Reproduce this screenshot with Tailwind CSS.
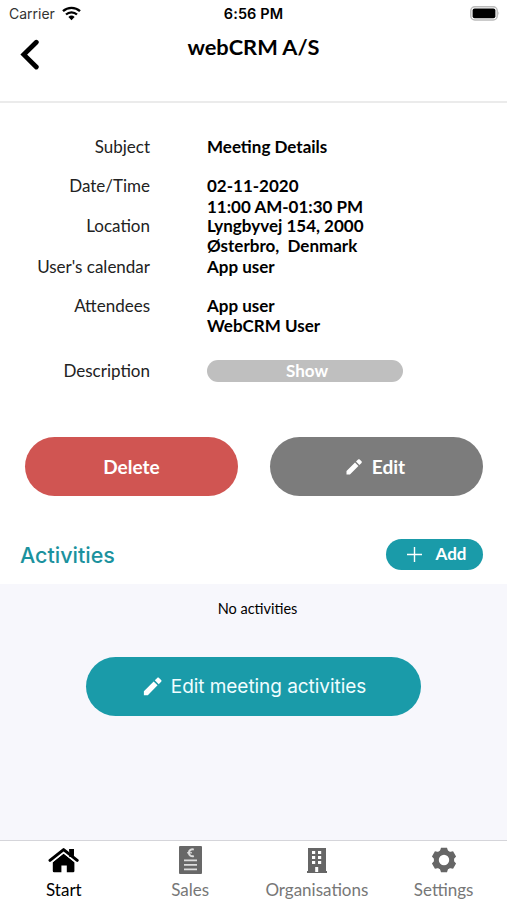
<!DOCTYPE html>
<html lang="en">
<head>
    <meta charset="UTF-8">
    <meta name="viewport" content="width=device-width, initial-scale=1.0">
    <title>webCRM A/S</title>
    <script src="https://cdn.jsdelivr.net/npm/@tailwindcss/browser@4"></script>
</head>
<body class="bg-white text-black font-['Lato',sans-serif]">
    <div class="w-[507px] h-[900px] flex flex-col overflow-hidden">
        <!-- Status bar -->
        <div class="h-[27px] shrink-0 grid grid-cols-3 items-center px-2 font-['Inter',sans-serif] text-[14px]">
            <div class="flex items-center gap-1.5 text-[#333]">
                <span class="w-[48px] whitespace-nowrap pl-px">Carrier</span>
                <svg class="w-[19px] h-[15px]" viewBox="0 0 19 15" fill="none" stroke="#000" stroke-width="2.3">
                    <path d="M1 5.2a12.3 12.3 0 0 1 17 0M4 8.5a8 8 0 0 1 11 0"/>
                    <path d="M6.4 11a4.6 4.6 0 0 1 6.2 0L9.5 14.2z" fill="#000" stroke="none"/>
                </svg>
            </div>
            <span class="text-center font-semibold text-[14.5px] tracking-[0.1px]">6:56 PM</span>
            <svg class="w-[30px] h-[15px] justify-self-end -mr-px" viewBox="0 0 30 15">
                <rect x=".8" y=".8" width="26.4" height="13.2" rx="4" fill="#fff" stroke="#bbb" stroke-width="1.5"/>
                <rect x="2.6" y="2.6" width="22.8" height="9.6" rx="2" fill="#000"/>
                <path d="M28.5 5.2q1.5 2.2 0 4.4z" fill="#aaa"/>
            </svg>
        </div>

        <!-- Header -->
        <header class="h-[76px] shrink-0 border-b-2 border-[#ebebeb] grid grid-cols-[60px_1fr_60px]">
            <svg class="w-[20px] h-[32px] ml-5 mt-[12px]" viewBox="0 0 20 32" fill="none" stroke="#000" stroke-width="4.8" stroke-linecap="round">
                <path d="M16.3 3.2L3.8 15.6L16.3 28"/>
            </svg>
            <h1 class="text-center text-[21.8px] leading-[28px] mt-[6px] font-bold">webCRM A/S</h1>
        </header>

        <!-- Meeting details -->
        <dl class="h-[334px] shrink-0 pt-[34px] grid grid-cols-[150px_1fr] gap-x-[57px] grid-rows-[39.4px_39.4px_40.8px_39px_65px_22px] text-[17px] leading-[20.5px]">
            <dt class="text-right text-[#222]">Subject</dt>
            <dd class="font-bold">Meeting Details</dd>
            <dt class="text-right text-[#222]">Date/Time</dt>
            <dd class="font-bold">02-11-2020<br>11:00 AM-01:30 PM</dd>
            <dt class="text-right text-[#222]">Location</dt>
            <dd class="font-bold">Lyngbyvej 154, 2000<br>Østerbro,&nbsp; Denmark</dd>
            <dt class="text-right text-[#222]">User's calendar</dt>
            <dd class="font-bold">App user</dd>
            <dt class="text-right text-[#222]">Attendees</dt>
            <dd class="font-bold">App user<br>WebCRM User</dd>
            <dt class="text-right text-[#222]">Description</dt>
            <dd><button class="block w-[196px] h-[22px] -mt-px rounded-full bg-[#bfbfbf] text-white font-bold leading-[21px] pl-1">Show</button></dd>
        </dl>

        <div class="flex justify-between pl-[25px] pr-[24px] shrink-0 text-white text-[19px] font-bold">
            <button class="w-[213px] h-[59px] rounded-full bg-[#d05552] pt-[2px]">Delete</button>
            <button class="w-[213px] h-[59px] rounded-full bg-[#7c7c7c] flex items-center justify-center gap-2 pr-1">
                <svg class="w-[20px] h-[20px]" viewBox="0 0 24 24" fill="#fff"><path d="M3 16.9V21h4.1L17.3 10.8 13.2 6.7zM21 7.1c.6-.6.6-1.3 0-1.9l-2.2-2.2c-.6-.6-1.3-.6-1.9 0l-2.5 2.5 4.1 4.1z"/></svg>
                <span class="pt-[2px]">Edit</span>
            </button>
        </div>

        <!-- Activities -->
        <div class="h-[88px] shrink-0 flex items-center justify-between pl-5 pr-[24px] pt-[28px]">
            <h2 class="font-['Inter',sans-serif] text-[21.5px] font-medium text-[#1b929e] pt-[3px]">Activities</h2>
            <button class="w-[97px] h-[31px] rounded-full bg-[#1a9ba9] text-white text-[17px] font-bold flex items-center justify-center gap-[14px] pl-1">
                <svg class="w-[15px] h-[15px]" viewBox="0 0 15 15" stroke="#fff" stroke-width="1.4"><path d="M7.5 0v15M0 7.5h15"/></svg>
                Add
            </button>
        </div>
        <main class="flex-1 bg-[#f7f7fc] flex flex-col items-center">
            <p class="mt-[15px] h-5 text-[14.5px] leading-5 pl-2">No activities</p>
            <button class="mt-[38px] w-[335px] h-[59px] rounded-full bg-[#1a9ba9] text-[#effdff] font-['Inter',sans-serif] text-[19px] tracking-[-0.05px] flex items-center justify-center gap-[7px]">
                <svg class="w-[23px] h-[23px]" viewBox="0 0 24 24" fill="#fff"><path d="M3 16.9V21h4.1L17.3 10.8 13.2 6.7zM21 7.1c.6-.6.6-1.3 0-1.9l-2.2-2.2c-.6-.6-1.3-.6-1.9 0l-2.5 2.5 4.1 4.1z"/></svg>
                <span class="pt-[2px]">Edit meeting activities</span>
            </button>
        </main>

        <!-- Tab bar -->
        <nav class="h-[60px] shrink-0 border-t border-[#d5d5da] bg-white grid grid-cols-4 text-[17px] leading-5 text-[#777]">
            <a class="flex flex-col items-center pt-[4px] gap-[5px] text-black">
                <svg class="w-[32px] h-[30px]" viewBox="0 0 32 30" fill="#000">
                    <path d="M22.3 4h4.6v9h-4.6z"/>
                    <path d="M16.6 8.4l10.8 8.9V26q0 1.3-1.3 1.3h-6.3v-6.8h-5.4v6.8H7.1q-1.3 0-1.3-1.3v-8.7z"/>
                    <path d="M3 16L16.6 5.2L30.2 16" fill="none" stroke="#fff" stroke-width="5.2"/>
                    <path d="M22.3 4h4.6v8h-4.6z"/>
                    <path d="M3 15.4L16.6 4.6l13.6 10.8" fill="none" stroke="#000" stroke-width="3" stroke-linejoin="round" stroke-linecap="round"/>
                </svg>
                <span class="pl-px">Start</span>
            </a>
            <a class="flex flex-col items-center pt-[4px] gap-[5px]">
                <svg class="w-[23px] h-[30px]" viewBox="0 0 23 30">
                    <rect y="1" width="23" height="28" rx="1" fill="#686868"/>
                    <path d="M5 15.3h13M5 19.8h13M5 24.3h13" stroke="#ddd" stroke-width="1.8"/>
                    <path d="M14.8 4.6a3.5 3.5 0 1 0 0 6.4" fill="none" stroke="#ddd" stroke-width="2"/>
                    <path d="M8 7.8h5" stroke="#ddd" stroke-width="1.2"/>
                </svg>
                <span>Sales</span>
            </a>
            <a class="flex flex-col items-center pt-[4px] gap-[5px]">
                <svg class="w-[22px] h-[30px]" viewBox="0 0 22 30" fill="#666">
                    <path d="M2 3h18v23h1v2H1v-2h1z"/>
                    <path d="M6 6h3.2v3H6zM12 6h3.2v3H12zM6 11h3.2v3H6zM12 11h3.2v3H12zM6 16h3.2v3H6zM12 16h3.2v3H12zM9.2 22h3v5h-3z" fill="#fff"/>
                </svg>
                <span>Organisations</span>
            </a>
            <a class="flex flex-col items-center pt-[4px] gap-[5px]">
                <svg class="w-[30px] h-[30px]" viewBox="-15 -15 30 30" fill="#666">
                    <circle r="7.7" fill="none" stroke="#666" stroke-width="5"/>
                    <g id="teeth">
                        <path d="M-4.2-8.5L-3-12.2h6L4.2-8.5zM-4.2 8.5L-3 12.2h6L4.2 8.5z"/>
                    </g>
                    <use href="#teeth" transform="rotate(60)"/>
                    <use href="#teeth" transform="rotate(120)"/>
                </svg>
                <span>Settings</span>
            </a>
        </nav>
    </div>
</body>
</html>
